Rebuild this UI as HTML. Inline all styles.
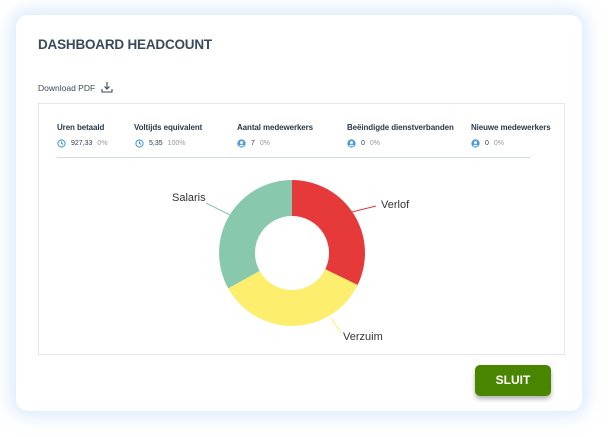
<!DOCTYPE html><html><head><style>
body{margin:0;width:608px;height:437px;background:#fff;font-family:"Liberation Sans",sans-serif;position:relative;overflow:hidden}
.card{position:absolute;left:16px;top:15px;width:566px;height:396px;border-radius:12px;background:#fff;box-shadow:0 0 16px 6px rgba(190,220,250,.55)}
h1{position:absolute;left:38px;top:37px;margin:0;font-size:13.5px;font-weight:bold;color:#3a4a5c;letter-spacing:-.2px}
.dl{position:absolute;left:38px;top:81px;font-size:8.5px;color:#3a4a5c}
.box{position:absolute;left:38px;top:103px;width:525px;height:250px;border:1px solid #e3e6ea}
.st{position:absolute;top:123px;font-size:8px;font-weight:bold;color:#2c3a4a;letter-spacing:-.1px}
.v{position:absolute;top:139px;font-size:7px;color:#2c3a4a;display:flex;align-items:center;gap:5px}
.v i{font-style:normal;color:#999}
.v svg{width:9px;height:9px}
.hr{position:absolute;left:57px;top:157px;width:473px;height:1px;background:#cfd8e3}
.btn{position:absolute;left:475px;top:365px;width:76px;height:31px;background:#4a8500;border-radius:5px;color:#fff;font-weight:bold;font-size:12px;text-align:center;line-height:31px;box-shadow:0 3px 5px rgba(0,0,0,.3)}
.lb{position:absolute;font-size:11px;color:#333}
</style></head><body>
<div class="card"></div>
<h1>DASHBOARD HEADCOUNT</h1>
<div class="dl">Download PDF <svg width="12" height="12" viewBox="0 0 12 12" style="vertical-align:-2px;margin-left:3px" fill="none" stroke="#3a4a5c" stroke-width="1.1"><path d="M6 1v7M3.5 5.5L6 8l2.5-2.5M1 8v3h10V8"/></svg></div>
<div class="box"></div>
<div class="st" style="left:57px">Uren betaald</div>
<div class="st" style="left:134px">Voltijds equivalent</div>
<div class="st" style="left:237px">Aantal medewerkers</div>
<div class="st" style="left:347px">Beëindigde dienstverbanden</div>
<div class="st" style="left:471px">Nieuwe medewerkers</div>
<div class="v" style="left:57px"><svg viewBox="0 0 10 10" fill="none" stroke="#4a9be0" stroke-width="1.2"><circle cx="5" cy="5" r="4"/><path d="M5 2.5V5l1.8 1"/></svg>927,33 <i>0%</i></div>
<div class="v" style="left:135px"><svg viewBox="0 0 10 10" fill="none" stroke="#4a9be0" stroke-width="1.2"><circle cx="5" cy="5" r="4"/><path d="M5 2.5V5l1.8 1"/></svg>5,35 <i>100%</i></div>
<div class="v" style="left:237px"><svg viewBox="0 0 10 10"><circle cx="5" cy="5" r="4.6" fill="#4a9be0"/><circle cx="5" cy="4" r="1.6" fill="#fff"/><path d="M2.2 8a3 2.5 0 0 1 5.6 0z" fill="#fff"/></svg>7 <i>0%</i></div>
<div class="v" style="left:347px"><svg viewBox="0 0 10 10"><circle cx="5" cy="5" r="4.6" fill="#4a9be0"/><circle cx="5" cy="4" r="1.6" fill="#fff"/><path d="M2.2 8a3 2.5 0 0 1 5.6 0z" fill="#fff"/></svg>0 <i>0%</i></div>
<div class="v" style="left:471px"><svg viewBox="0 0 10 10"><circle cx="5" cy="5" r="4.6" fill="#4a9be0"/><circle cx="5" cy="4" r="1.6" fill="#fff"/><path d="M2.2 8a3 2.5 0 0 1 5.6 0z" fill="#fff"/></svg>0 <i>0%</i></div>
<div class="hr"></div>
<svg style="position:absolute;left:0;top:0" width="608" height="437">
<path d="M292,180 A73,73 0 0 1 357.6,285 L325.3,269.2 A37,37 0 0 0 292,216 Z" fill="#e63a3a"/>
<path d="M357.6,285 A73,73 0 0 1 228.2,288.4 L259.6,270.9 A37,37 0 0 0 325.3,269.2 Z" fill="#fdee6e"/>
<path d="M228.2,288.4 A73,73 0 0 1 292,180 L292,216 A37,37 0 0 0 259.6,270.9 Z" fill="#88c9ad"/>
<path d="M206,203 L230,215" stroke="#88c9ad" fill="none"/>
<path d="M352,212 L376,206" stroke="#e63a3a" fill="none"/>
<path d="M331,318 L341,333" stroke="#fdee6e" fill="none"/>
</svg>
<div class="lb" style="left:172px;top:192px">Salaris</div>
<div class="lb" style="left:381px;top:199px">Verlof</div>
<div class="lb" style="left:343px;top:331px">Verzuim</div>
<div class="btn">SLUIT</div>
</body></html>
